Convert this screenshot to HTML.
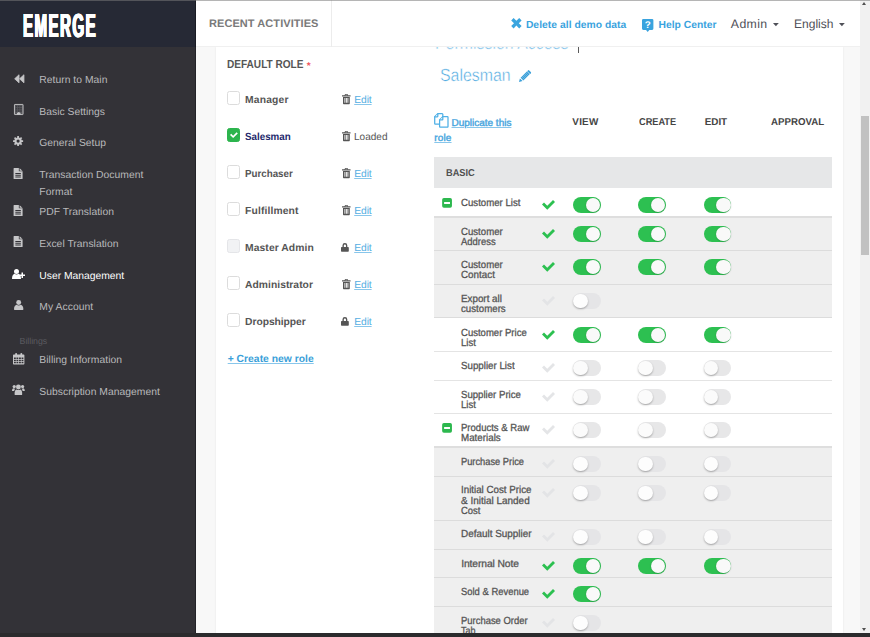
<!DOCTYPE html>
<html lang="en">
<head>
<meta charset="utf-8">
<title>EMERGE - User Management</title>
<style>
*{box-sizing:border-box}
html,body{margin:0;padding:0}
body{text-rendering:geometricPrecision;width:870px;height:637px;overflow:hidden;position:relative;background:#f8f8f8;font-family:"Liberation Sans",sans-serif;color:#555}
.t{position:absolute;white-space:nowrap;line-height:1;display:block;transform-origin:0 50%}
svg{position:absolute;overflow:visible}
ul{list-style:none;margin:0;padding:0}
a{text-decoration:none;color:inherit}
.sidebar{position:absolute;left:0;top:0;width:196px;height:633px;background:#333237;border-right:1px solid #232328;z-index:5}
.logo{position:absolute;left:0;top:0;width:196px;height:47px;background:#262935;border-right:1px solid #191b23}
.logo b{position:absolute;left:23.3px;top:10px;font-size:33.4px;line-height:1;color:#fff;transform-origin:0 0;transform:scaleX(.452);text-shadow:1.3px 0 0 #fff,-1.3px 0 0 #fff,.65px 0 0 #fff,-.65px 0 0 #fff;letter-spacing:3.2px}
.menu .t{color:#b9b9bb}
.menu .on .t{color:#fff}
.topbar{position:absolute;left:196px;top:0;width:664px;height:47px;background:#fff;border-bottom:1px solid #f0f0f0;z-index:4}
.topbar i{position:absolute;left:135px;top:0;width:1px;height:47px;background:#ececec}
.blue{color:#3aa3de}
.lnk{color:#55aee2;text-decoration:underline;text-decoration-thickness:1.3px;text-underline-offset:1px;text-decoration-color:rgba(85,174,226,.7)}
.panel{position:absolute;left:216px;top:47px;width:627px;height:590px;background:#fff;box-shadow:0 0 2px rgba(0,0,0,.08)}
.cb{position:absolute;width:13.2px;height:13.4px;border:1px solid #dcdcdc;border-radius:2.5px;background:#fff}
.cb.dis{background:#f1f2f4;border-color:#e4e5e8}
.cb.chk{background:#2cb44d;border-color:#2cb44d}
.lt{-webkit-text-stroke:.45px #fff}
.sb{font-weight:400;-webkit-text-stroke:.3px currentColor}
.row{position:absolute;left:434px;width:398px;border-bottom:1px solid #dcdcdc}
.row.g{background:#efefef}
.row.w{background:#fff;border-bottom-color:#e4e4e4}
.row.p{border-bottom:2px solid #dedede}
.row.h{background:#e6e7e8;border-bottom:0}
.sw{position:absolute;width:27.6px;height:16.1px;border-radius:8.1px;background:#2dc051}
.sw:after{content:"";position:absolute;right:.7px;top:.9px;width:14.2px;height:14.2px;border-radius:50%;background:#f9f9f9;box-shadow:0 .5px 1.5px rgba(0,0,0,.25)}
.sw.off{background:#e7e7e8}
.sw.off:after{right:auto;left:0;top:.6px;width:14.6px;height:14.6px;background:#fbfbfb;box-shadow:0 1px 2px rgba(0,0,0,.3)}
.g .sw.off{background:#e5e5e7}
.g .sw.off:after{background:#fdfdfd}
.scroll{position:absolute;left:860px;top:0;width:10px;height:633px;background:#f1f1f1;z-index:6}
.scroll b{position:absolute;left:.8px;top:115.5px;width:8.4px;height:139.2px;background:#c1c1c1}
.scroll:before,.scroll:after{content:"";position:absolute;left:2.4px;border:2.7px solid transparent}
.scroll:before{top:2.2px;border-bottom:3px solid #505050;border-top:0}
.scroll:after{bottom:2.2px;border-top:3px solid #505050;border-bottom:0}
.topline{position:absolute;left:0;top:0;width:870px;height:1.2px;background:rgba(120,120,120,.55);z-index:9}
.bottombar{position:absolute;left:0;top:633px;width:870px;height:4px;background:#2b2b2d;z-index:9}
</style>
</head>
<body>
<div class="topline"></div>
<aside class="sidebar">
<div class="logo"><b>EMERGE</b></div>
<ul class="menu">
<li><a><svg style="left:13.8px;top:73.7px" width="10.6" height="9.6" viewBox="0 0 21 19" fill="#c6c6c8" ><path stroke="#c6c6c8" stroke-width="1.600" stroke-linejoin="round" d="M10 1.500v16L1.300 9.500z M19.700 1.500v16L11 9.500z"/></svg><span class="t" style="left:39.3px;top:76.00px;font-size:10.35px;letter-spacing:0.021px;">Return to Main</span></a></li>
<li><a><svg style="left:13.8px;top:104.4px" width="9.5" height="11" viewBox="0 0 19 22" fill="#c6c6c8" ><rect x=".9" y=".9" width="17.2" height="20.2" rx=".6" fill="#59595d" stroke="#c6c6c8" stroke-width="1.8"/><path fill="#3b3b40" d="M3.500 3.500h3v3h-3z M8 3.500h3v3h-3z M12.500 3.500h3v3h-3z M3.500 8h3v3h-3z M8 8h3v3h-3z M12.500 8h3v3h-3z M3.500 12.500h3v3h-3z M8 12.500h3v3h-3z M12.500 12.500h3v3h-3z"/><path d="M6 21.500v-3.500l3.500-2 3.500 2v3.500z"/></svg><span class="t" style="left:39.3px;top:108.00px;font-size:10.35px;letter-spacing:0.013px;">Basic Settings</span></a></li>
<li><a><svg style="left:13.3px;top:136.2px" width="10.2" height="10.2" viewBox="0 0 20 20" fill="#c6c6c8" ><path fill-rule="evenodd" d="M19.85 8.28 L19.85 11.72 L17.20 11.73 L16.31 13.87 L18.18 15.75 L15.75 18.18 L13.87 16.31 L11.73 17.20 L11.72 19.85 L8.28 19.85 L8.27 17.20 L6.13 16.31 L4.25 18.18 L1.82 15.75 L3.69 13.87 L2.80 11.73 L0.15 11.72 L0.15 8.28 L2.80 8.27 L3.69 6.13 L1.82 4.25 L4.25 1.82 L6.13 3.69 L8.27 2.80 L8.28 0.15 L11.72 0.15 L11.73 2.80 L13.87 3.69 L15.75 1.82 L18.18 4.25 L16.31 6.13 L17.20 8.27Z M13.10 10.00 A3.1 3.1 0 1 0 6.90 10.00 A3.1 3.1 0 1 0 13.10 10.00Z"/></svg><span class="t" style="left:39.3px;top:139.00px;font-size:10.35px;">General Setup</span></a></li>
<li><a><svg style="left:13.3px;top:167.8px" width="10.2" height="11" viewBox="0 0 20 22" fill="#c6c6c8" ><path fill-rule="evenodd" d="M1 0h10.5v6.5h7.5v14.5a1 1 0 0 1-1 1h-16a1 1 0 0 1-1-1v-20a1 1 0 0 1 1-1z M13 0.3l5.7 5h-5.7z M4.5 10v1.8h11v-1.8z M4.5 13.5v1.8h11v-1.8z M4.5 17v1.8h11v-1.8z"/></svg><span class="t" style="left:39.3px;top:171.00px;font-size:10.35px;letter-spacing:0.023px;">Transaction Document</span><span class="t" style="left:39.3px;top:188.00px;font-size:10.35px;letter-spacing:0.070px;">Format</span></a></li>
<li><a><svg style="left:13.3px;top:204.7px" width="10.2" height="11" viewBox="0 0 20 22" fill="#c6c6c8" ><path fill-rule="evenodd" d="M1 0h10.5v6.5h7.5v14.5a1 1 0 0 1-1 1h-16a1 1 0 0 1-1-1v-20a1 1 0 0 1 1-1z M13 0.3l5.7 5h-5.7z M4.5 10v1.8h11v-1.8z M4.5 13.5v1.8h11v-1.8z M4.5 17v1.8h11v-1.8z"/></svg><span class="t" style="left:39.3px;top:208.00px;font-size:10.35px;letter-spacing:0.039px;">PDF Translation</span></a></li>
<li><a><svg style="left:13.3px;top:236.1px" width="10.2" height="11" viewBox="0 0 20 22" fill="#c6c6c8" ><path fill-rule="evenodd" d="M1 0h10.5v6.5h7.5v14.5a1 1 0 0 1-1 1h-16a1 1 0 0 1-1-1v-20a1 1 0 0 1 1-1z M13 0.3l5.7 5h-5.7z M4.5 10v1.8h11v-1.8z M4.5 13.5v1.8h11v-1.8z M4.5 17v1.8h11v-1.8z"/></svg><span class="t" style="left:39.3px;top:240.00px;font-size:10.35px;letter-spacing:0.022px;">Excel Translation</span></a></li>
<li class=on><a><svg style="left:12.2px;top:268.7px" width="13" height="10.2" viewBox="0 0 26 20" fill="#fff" ><circle cx="9" cy="5" r="5"/><path d="M0 19c0-6 3-9 5-9.5q4 3 8 0c2 .5 5 3.500 5 9.500a1.500 1 0 0 1-1.500 1h-15a1.500 1 0 0 1-1.500-1z"/><path d="M19 7h3v4h4v3h-4v4h-3v-4h-4v-3h4z"/></svg><span class="t" style="left:39.3px;top:272.00px;font-size:10.35px;letter-spacing:-0.013px;">User Management</span></a></li>
<li><a><svg style="left:13.8px;top:300.2px" width="9.4" height="9.9" viewBox="0 0 19 20" fill="#c6c6c8" ><circle cx="9.500" cy="5" r="5"/><path d="M0 18.500c0-6 3-8.500 5-9q4.500 3 9 0c2 .5 5 3 5 9a1.500 1.500 0 0 1-1.500 1.500h-16a1.500 1.500 0 0 1-1.500-1.500z"/></svg><span class="t" style="left:39.3px;top:303.00px;font-size:10.35px;letter-spacing:0.050px;">My Account</span></a></li>
<li class="sep"><span class="t" style="left:19.6px;top:337.00px;font-size:8.8px;letter-spacing:-0.034px;color:#5b5b60;">Billings</span></li>
<li><a><svg style="left:12.8px;top:352.6px" width="11.4" height="11.4" viewBox="0 0 23 23" fill="#c6c6c8" ><path fill-rule="evenodd" d="M1.500 3h20a1.500 1.500 0 0 1 1.500 1.500v17a1.500 1.500 0 0 1-1.500 1.500h-20a1.500 1.500 0 0 1-1.500-1.500v-17a1.500 1.500 0 0 1 1.500-1.500z M2 9v3h3.700v-3z M7 9v3h3.700v-3z M12.200 9v3h3.700v-3z M17.300 9v3h3.700v-3z M2 13.400v3h3.700v-3z M7 13.400v3h3.700v-3z M12.200 13.400v3h3.700v-3z M17.300 13.400v3h3.700v-3z M2 17.800v3h3.700v-3z M7 17.800v3h3.700v-3z M12.200 17.800v3h3.700v-3z M17.300 17.800v3h3.700v-3z"/><rect x="4.500" y="0" width="3.600" height="6.500" rx="1.500"/><rect x="15" y="0" width="3.600" height="6.500" rx="1.500"/></svg><span class="t" style="left:39.3px;top:356.00px;font-size:10.35px;letter-spacing:0.028px;">Billing Information</span></a></li>
<li><a><svg style="left:12.0px;top:384.0px" width="12.8" height="11" viewBox="0 0 26 22" fill="#c6c6c8" ><circle cx="13" cy="6" r="5"/><path d="M5.500 22c-1-6 1-10.500 3.500-11q4 2.500 8 0c2.500 .5 4.500 5 3.500 11z"/><circle cx="4.500" cy="5" r="3.300"/><circle cx="21.500" cy="5" r="3.300"/><path d="M0 14c0-3.500 1.500-5 3-5.300q2 1 4 .3q-2.500 2.500-2.500 5z"/><path d="M26 14c0-3.500-1.500-5-3-5.300q-2 1-4 .3q2.500 2.500 2.500 5z"/></svg><span class="t" style="left:39.3px;top:388.00px;font-size:10.35px;letter-spacing:0.016px;">Subscription Management</span></a></li>
</ul>
</aside>
<header class="topbar">
<span class="t" style="left:13.0px;top:19.00px;font-size:11px;letter-spacing:0.066px;color:#7a7a7a;font-weight:700;">RECENT ACTIVITIES</span><i></i>
<svg style="left:315.1px;top:17.9px" width="10.8" height="10.4" viewBox="0 0 20 20" fill="#3aa5df" ><path d="M4.600 0l5.400 5.400 5.400-5.400 4.600 4.600-5.400 5.400 5.400 5.400-4.600 4.600-5.400-5.400-5.400 5.400-4.600-4.600 5.400-5.400-5.400-5.400z"/></svg><span class="t blue" style="left:329.9px;top:21.00px;font-size:10.3px;letter-spacing:0.044px;font-weight:700;">Delete all demo data</span><svg style="left:446.2px;top:18.8px" width="11.4" height="13" viewBox="0 0 22 25" fill="#3aa3de" ><path d="M2.500 0h17a2.500 2.500 0 0 1 2.500 2.500v16a2.500 2.500 0 0 1-2.500 2.500h-5.300l-3.200 4-3.200-4h-5.300a2.500 2.500 0 0 1-2.500-2.500v-16a2.500 2.500 0 0 1 2.500-2.500z"/><text x="11" y="17.800" font-size="19" font-weight="700" text-anchor="middle" fill="#fff" font-family="Liberation Sans,sans-serif">?</text></svg><span class="t blue" style="left:462.5px;top:21.00px;font-size:10.3px;letter-spacing:0.012px;font-weight:700;">Help Center</span><span class="t" style="left:534.8px;top:18.00px;font-size:12.3px;letter-spacing:0.389px;color:#4f5058;">Admin</span><svg style="left:576.8px;top:23.2px" width="5.8" height="3.2" viewBox="0 0 12 6.500" fill="#4f5058" ><path d="M0 0h12l-6 6.500z"/></svg><span class="t" style="left:597.5px;top:18.00px;font-size:12.3px;transform:scaleX(0.9795);color:#4f5058;">English</span><svg style="left:642.6px;top:23.2px" width="5.8" height="3.2" viewBox="0 0 12 6.500" fill="#4f5058" ><path d="M0 0h12l-6 6.500z"/></svg></header>
<main class="panel"></main>
<section class="roles">
<span class="t" style="left:227.4px;top:59.00px;font-size:11.6px;transform:scaleX(0.8688);color:#555;font-weight:700;">DEFAULT ROLE</span><span class="t" style="left:306.8px;top:62.00px;font-size:10px;color:#f0525a;font-weight:700;">*</span><div class="role"><span class="cb " style="left:227px;top:91.4px"></span><span class="t" style="left:245.1px;top:96.00px;font-size:10.3px;letter-spacing:0.159px;color:#555;font-weight:700;">Manager</span><svg style="left:341.8px;top:94.1px" width="8.8" height="10.2" viewBox="0 0 18 21" fill="#555" ><path fill-rule="evenodd" d="M6.500 0h5l1 2.500h5v2.500h-17.500v-2.500h5z M7.300 1.300l-.5 1.200h4.400l-.5-1.200z M2 6h14v13.500a1.500 1.500 0 0 1-1.500 1.500h-11a1.500 1.500 0 0 1-1.500-1.500z M5 8.500v9.500h1.800v-9.500z M8.100 8.500v9.500h1.800v-9.500z M11.200 8.500v9.500h1.800v-9.500z"/></svg><a class="t lnk" style="left:354.2px;top:96.00px;font-size:10.3px;letter-spacing:-0.078px;">Edit</a></div>
<div class="role"><span class="cb chk" style="left:227px;top:128.4px"><svg style="left:1.9px;top:2.8px" width="7.8" height="6.1" viewBox="0 0 26 19" fill="#fff"><path d="M22 0l4 4-15.500 15.500-10.500-10.500 4-4 6.500 6.500z"/></svg></span><span class="t" style="left:245.1px;top:133.00px;font-size:10.3px;transform:scaleX(0.9505);color:#23286b;font-weight:700;">Salesman</span><svg style="left:341.8px;top:131.1px" width="8.8" height="10.2" viewBox="0 0 18 21" fill="#555" ><path fill-rule="evenodd" d="M6.500 0h5l1 2.500h5v2.500h-17.500v-2.500h5z M7.300 1.300l-.5 1.200h4.400l-.5-1.200z M2 6h14v13.500a1.500 1.500 0 0 1-1.500 1.500h-11a1.500 1.500 0 0 1-1.500-1.500z M5 8.500v9.500h1.800v-9.500z M8.100 8.500v9.500h1.800v-9.500z M11.200 8.500v9.500h1.800v-9.500z"/></svg><span class="t" style="left:354.2px;top:133.00px;font-size:10.3px;transform:scaleX(0.9750);color:#555;">Loaded</span></div>
<div class="role"><span class="cb " style="left:227px;top:165.4px"></span><span class="t" style="left:245.1px;top:170.00px;font-size:10.3px;transform:scaleX(0.9472);color:#555;font-weight:700;">Purchaser</span><svg style="left:341.8px;top:168.1px" width="8.8" height="10.2" viewBox="0 0 18 21" fill="#555" ><path fill-rule="evenodd" d="M6.500 0h5l1 2.500h5v2.500h-17.500v-2.500h5z M7.300 1.300l-.5 1.200h4.400l-.5-1.200z M2 6h14v13.500a1.500 1.500 0 0 1-1.500 1.500h-11a1.500 1.500 0 0 1-1.500-1.500z M5 8.500v9.500h1.800v-9.500z M8.100 8.500v9.500h1.800v-9.500z M11.200 8.500v9.500h1.800v-9.500z"/></svg><a class="t lnk" style="left:354.2px;top:170.00px;font-size:10.3px;letter-spacing:-0.078px;">Edit</a></div>
<div class="role"><span class="cb " style="left:227px;top:202.4px"></span><span class="t" style="left:245.1px;top:207.00px;font-size:10.3px;letter-spacing:0.125px;color:#555;font-weight:700;">Fulfillment</span><svg style="left:341.8px;top:205.1px" width="8.8" height="10.2" viewBox="0 0 18 21" fill="#555" ><path fill-rule="evenodd" d="M6.500 0h5l1 2.500h5v2.500h-17.500v-2.500h5z M7.300 1.300l-.5 1.200h4.400l-.5-1.200z M2 6h14v13.500a1.500 1.500 0 0 1-1.500 1.500h-11a1.500 1.500 0 0 1-1.500-1.500z M5 8.500v9.500h1.800v-9.500z M8.100 8.500v9.500h1.800v-9.500z M11.200 8.500v9.500h1.800v-9.500z"/></svg><a class="t lnk" style="left:354.2px;top:207.00px;font-size:10.3px;letter-spacing:-0.078px;">Edit</a></div>
<div class="role"><span class="cb dis" style="left:227px;top:239.4px"></span><span class="t" style="left:245.1px;top:244.00px;font-size:10.3px;letter-spacing:0.081px;color:#555;font-weight:700;">Master Admin</span><svg style="left:341.4px;top:242.5px" width="7.8" height="8.9" viewBox="0 0 16 18" fill="#555" ><path fill-rule="evenodd" d="M3 8v-3a5 5 0 0 1 10 0v3h1.500a1.500 1.500 0 0 1 1.500 1.500v7a1.500 1.500 0 0 1-1.500 1.500h-13a1.500 1.500 0 0 1-1.500-1.500v-7a1.500 1.500 0 0 1 1.500-1.500z M5.800 8h4.400v-3a2.200 2.200 0 0 0-4.400 0z"/></svg><a class="t lnk" style="left:354.2px;top:244.00px;font-size:10.3px;letter-spacing:-0.078px;">Edit</a></div>
<div class="role"><span class="cb " style="left:227px;top:276.4px"></span><span class="t" style="left:245.1px;top:281.00px;font-size:10.3px;letter-spacing:0.025px;color:#555;font-weight:700;">Administrator</span><svg style="left:341.8px;top:279.1px" width="8.8" height="10.2" viewBox="0 0 18 21" fill="#555" ><path fill-rule="evenodd" d="M6.500 0h5l1 2.500h5v2.500h-17.500v-2.500h5z M7.300 1.300l-.5 1.200h4.400l-.5-1.200z M2 6h14v13.500a1.500 1.500 0 0 1-1.500 1.500h-11a1.500 1.500 0 0 1-1.500-1.500z M5 8.500v9.500h1.800v-9.500z M8.100 8.500v9.500h1.800v-9.500z M11.200 8.500v9.500h1.800v-9.500z"/></svg><a class="t lnk" style="left:354.2px;top:281.00px;font-size:10.3px;letter-spacing:-0.078px;">Edit</a></div>
<div class="role"><span class="cb " style="left:227px;top:313.4px"></span><span class="t" style="left:245.1px;top:318.00px;font-size:10.3px;letter-spacing:-0.060px;color:#555;font-weight:700;">Dropshipper</span><svg style="left:341.4px;top:316.5px" width="7.8" height="8.9" viewBox="0 0 16 18" fill="#555" ><path fill-rule="evenodd" d="M3 8v-3a5 5 0 0 1 10 0v3h1.500a1.500 1.500 0 0 1 1.500 1.500v7a1.500 1.500 0 0 1-1.500 1.500h-13a1.500 1.500 0 0 1-1.500-1.500v-7a1.500 1.500 0 0 1 1.500-1.500z M5.800 8h4.400v-3a2.200 2.200 0 0 0-4.400 0z"/></svg><a class="t lnk" style="left:354.2px;top:318.00px;font-size:10.3px;letter-spacing:-0.078px;">Edit</a></div>
<a class="t lnk" style="left:227.7px;top:355.00px;font-size:10.3px;letter-spacing:0.028px;font-weight:700;color:#3a9fd9;">+ Create new role</a></section>
<section class="perms">
<h2 class="t lt" style="left:435.3px;top:34.00px;font-size:18.4px;transform:scaleX(0.8645);color:#7cc0e9;margin:0;font-weight:400;">Permission Access</h2><span style="position:absolute;left:577.6px;top:36px;width:1px;height:16.8px;background:#5a5a5a"></span><h3 class="t lt" style="left:440.1px;top:67.00px;font-size:17.6px;transform:scaleX(0.9020);color:#4aa7de;margin:0;font-weight:400;">Salesman</h3><svg style="left:519.1px;top:70.0px" width="12.5" height="12" viewBox="0 0 25 24" fill="#3a9fd9" ><path d="M0 24l1.800-7.200 5.400 5.400z M3.200 15.300l13-13 5.500 5.500-13 13z M17.600 .9a2 2 0 0 1 2.800 0l3.200 3.200a2 2 0 0 1 0 2.800l-1 1-5.500-5.500z"/><path stroke="#fff" stroke-opacity=".55" stroke-width=".9" fill="none" d="M5 17l12.500-12.500 M7 19l12.500-12.500"/></svg><svg style="left:434.0px;top:113.0px" width="15" height="15" viewBox="0 0 15 15" fill="none" ><g fill="#fff" stroke="#4fb0e6" stroke-width="1.250" stroke-linejoin="round" stroke-linecap="round"><path d="M3.800 .7H8.200a.6 .6 0 0 1 .6 .6V10.400a.6 .6 0 0 1-.6 .6H1.300a.6 .6 0 0 1-.6-.6V3.800z"/><path d="M3.800 .9V3.300a.5 .5 0 0 1-.5 .5H.9"/><path d="M8.800 3.700H13.400a.6 .6 0 0 1 .6 .6V13.600a.6 .6 0 0 1-.6 .6H6.200a.6 .6 0 0 1-.6-.6V6.900z"/><path d="M8.800 3.900V6.400a.5 .5 0 0 1-.5 .5H5.800"/></g></svg><a class="t lnk sb" style="left:451.5px;top:119.00px;font-size:10.0px;letter-spacing:-0.010px;-webkit-text-stroke-width:.42px;color:#49a6de;">Duplicate this</a><a class="t lnk sb" style="left:434.3px;top:134.00px;font-size:10.0px;letter-spacing:0.138px;-webkit-text-stroke-width:.42px;color:#49a6de;">role</a><span class="t" style="left:572.3px;top:118.00px;font-size:9.9px;letter-spacing:0.248px;color:#444;font-weight:700;">VIEW</span><span class="t" style="left:638.5px;top:118.00px;font-size:9.9px;transform:scaleX(0.9303);color:#444;font-weight:700;">CREATE</span><span class="t" style="left:704.8px;top:118.00px;font-size:9.9px;letter-spacing:-0.068px;color:#444;font-weight:700;">EDIT</span><span class="t" style="left:771.3px;top:118.00px;font-size:9.9px;transform:scaleX(0.9807);color:#444;font-weight:700;">APPROVAL</span><div class="row h" style="top:157px;height:31px"><span class="t" style="left:12.0px;top:12.00px;font-size:10.0px;transform:scaleX(0.9253);color:#505050;font-weight:700;">BASIC</span></div>
<div class="row w p" style="top:188px;height:30px"><svg style="left:7.9px;top:10.0px" width="10.1" height="9.8" viewBox="0 0 20 20" fill="#2cb84e" ><path fill-rule="evenodd" d="M3.500 0h13a3.500 3.500 0 0 1 3.500 3.500v13a3.500 3.500 0 0 1-3.500 3.500h-13a3.500 3.500 0 0 1-3.500-3.500v-13a3.500 3.500 0 0 1 3.500-3.500z M4 8v4h12v-4z"/></svg><span class="t sb" style="left:27.2px;top:11.00px;font-size:10.3px;transform:scaleX(0.9368);color:#555;">Customer List</span><svg style="left:107.7px;top:11.8px" width="13" height="9.6" viewBox="0 0 26 19" fill="#2cc050" ><path d="M22 0l4 4-15.500 15.500-10.500-10.500 4-4 6.500 6.500z"/></svg><span class="sw" style="left:139.2px;top:9px"></span><span class="sw" style="left:204.3px;top:9px"></span><span class="sw" style="left:269.6px;top:9px"></span></div>
<div class="row g" style="top:218px;height:33px"><span class="t sb" style="left:27.2px;top:10.00px;font-size:10.3px;transform:scaleX(0.9345);color:#555;">Customer</span><span class="t sb" style="left:27.2px;top:20.00px;font-size:10.3px;transform:scaleX(0.9162);color:#555;">Address</span><svg style="left:107.7px;top:10.8px" width="13" height="9.6" viewBox="0 0 26 19" fill="#2cc050" ><path d="M22 0l4 4-15.500 15.500-10.500-10.500 4-4 6.500 6.500z"/></svg><span class="sw" style="left:139.2px;top:8px"></span><span class="sw" style="left:204.3px;top:8px"></span><span class="sw" style="left:269.6px;top:8px"></span></div>
<div class="row g" style="top:251px;height:34px"><span class="t sb" style="left:27.2px;top:10.00px;font-size:10.3px;transform:scaleX(0.9345);color:#555;">Customer</span><span class="t sb" style="left:27.2px;top:20.00px;font-size:10.3px;transform:scaleX(0.9554);color:#555;">Contact</span><svg style="left:107.7px;top:10.8px" width="13" height="9.6" viewBox="0 0 26 19" fill="#2cc050" ><path d="M22 0l4 4-15.500 15.500-10.500-10.500 4-4 6.500 6.500z"/></svg><span class="sw" style="left:139.2px;top:8px"></span><span class="sw" style="left:204.3px;top:8px"></span><span class="sw" style="left:269.6px;top:8px"></span></div>
<div class="row g" style="top:285px;height:33px"><span class="t sb" style="left:27.2px;top:10.00px;font-size:10.3px;transform:scaleX(0.9529);color:#555;">Export all</span><span class="t sb" style="left:27.2px;top:20.00px;font-size:10.3px;transform:scaleX(0.9414);color:#555;">customers</span><svg style="left:107.7px;top:10.8px" width="13" height="9.6" viewBox="0 0 26 19" fill="#e3e4e6" ><path d="M22 0l4 4-15.500 15.500-10.500-10.500 4-4 6.500 6.500z"/></svg><span class="sw off" style="left:139.2px;top:8px"></span></div>
<div class="row w" style="top:318px;height:34px"><span class="t sb" style="left:27.2px;top:11.00px;font-size:10.3px;transform:scaleX(0.9262);color:#555;">Customer Price</span><span class="t sb" style="left:27.2px;top:21.00px;font-size:10.3px;transform:scaleX(0.9304);color:#555;">List</span><svg style="left:107.7px;top:11.8px" width="13" height="9.6" viewBox="0 0 26 19" fill="#2cc050" ><path d="M22 0l4 4-15.500 15.500-10.500-10.500 4-4 6.500 6.500z"/></svg><span class="sw" style="left:139.2px;top:9px"></span><span class="sw" style="left:204.3px;top:9px"></span><span class="sw" style="left:269.6px;top:9px"></span></div>
<div class="row w" style="top:352px;height:29px"><span class="t sb" style="left:27.2px;top:10.00px;font-size:10.3px;transform:scaleX(0.9461);color:#555;">Supplier List</span><svg style="left:107.7px;top:10.8px" width="13" height="9.6" viewBox="0 0 26 19" fill="#e4e5e7" ><path d="M22 0l4 4-15.500 15.500-10.500-10.500 4-4 6.500 6.500z"/></svg><span class="sw off" style="left:139.2px;top:8px"></span><span class="sw off" style="left:204.3px;top:8px"></span><span class="sw off" style="left:269.6px;top:8px"></span></div>
<div class="row w" style="top:381px;height:33px"><span class="t sb" style="left:27.2px;top:10.00px;font-size:10.3px;transform:scaleX(0.9346);color:#555;">Supplier Price</span><span class="t sb" style="left:27.2px;top:20.00px;font-size:10.3px;transform:scaleX(0.9304);color:#555;">List</span><svg style="left:107.7px;top:10.8px" width="13" height="9.6" viewBox="0 0 26 19" fill="#e4e5e7" ><path d="M22 0l4 4-15.500 15.500-10.500-10.500 4-4 6.500 6.500z"/></svg><span class="sw off" style="left:139.2px;top:8px"></span><span class="sw off" style="left:204.3px;top:8px"></span><span class="sw off" style="left:269.6px;top:8px"></span></div>
<div class="row w p" style="top:414px;height:34px"><svg style="left:7.9px;top:9.0px" width="10.1" height="9.8" viewBox="0 0 20 20" fill="#2cb84e" ><path fill-rule="evenodd" d="M3.500 0h13a3.500 3.500 0 0 1 3.500 3.500v13a3.500 3.500 0 0 1-3.500 3.500h-13a3.500 3.500 0 0 1-3.500-3.500v-13a3.500 3.500 0 0 1 3.500-3.500z M4 8v4h12v-4z"/></svg><span class="t sb" style="left:27.2px;top:10.00px;font-size:10.3px;transform:scaleX(0.9253);color:#555;">Products &amp; Raw</span><span class="t sb" style="left:27.2px;top:20.00px;font-size:10.3px;transform:scaleX(0.9505);color:#555;">Materials</span><svg style="left:107.7px;top:10.8px" width="13" height="9.6" viewBox="0 0 26 19" fill="#e4e5e7" ><path d="M22 0l4 4-15.500 15.500-10.500-10.500 4-4 6.500 6.500z"/></svg><span class="sw off" style="left:139.2px;top:8px"></span><span class="sw off" style="left:204.3px;top:8px"></span><span class="sw off" style="left:269.6px;top:8px"></span></div>
<div class="row g" style="top:448px;height:29px"><span class="t sb" style="left:27.2px;top:10.00px;font-size:10.3px;transform:scaleX(0.9024);color:#555;">Purchase Price</span><svg style="left:107.7px;top:10.8px" width="13" height="9.6" viewBox="0 0 26 19" fill="#e3e4e6" ><path d="M22 0l4 4-15.500 15.500-10.500-10.500 4-4 6.500 6.500z"/></svg><span class="sw off" style="left:139.2px;top:8px"></span><span class="sw off" style="left:204.3px;top:8px"></span><span class="sw off" style="left:269.6px;top:8px"></span></div>
<div class="row g" style="top:477px;height:44px"><span class="t sb" style="left:27.2px;top:9.00px;font-size:10.3px;transform:scaleX(0.9477);color:#555;">Initial Cost Price</span><span class="t sb" style="left:27.2px;top:20.00px;font-size:10.3px;transform:scaleX(0.9678);color:#555;">&amp; Initial Landed</span><span class="t sb" style="left:27.2px;top:30.00px;font-size:10.3px;transform:scaleX(0.9163);color:#555;">Cost</span><svg style="left:107.7px;top:10.8px" width="13" height="9.6" viewBox="0 0 26 19" fill="#e3e4e6" ><path d="M22 0l4 4-15.500 15.500-10.500-10.500 4-4 6.500 6.500z"/></svg><span class="sw off" style="left:139.2px;top:8px"></span><span class="sw off" style="left:204.3px;top:8px"></span><span class="sw off" style="left:269.6px;top:8px"></span></div>
<div class="row g" style="top:521px;height:29px"><span class="t sb" style="left:27.2px;top:9.00px;font-size:10.3px;transform:scaleX(0.9625);color:#555;">Default Supplier</span><svg style="left:107.7px;top:10.8px" width="13" height="9.6" viewBox="0 0 26 19" fill="#e3e4e6" ><path d="M22 0l4 4-15.500 15.500-10.500-10.500 4-4 6.500 6.500z"/></svg><span class="sw off" style="left:139.2px;top:8px"></span><span class="sw off" style="left:204.3px;top:8px"></span><span class="sw off" style="left:269.6px;top:8px"></span></div>
<div class="row g" style="top:550px;height:28px"><span class="t sb" style="left:27.2px;top:10.00px;font-size:10.3px;letter-spacing:-0.104px;color:#555;">Internal Note</span><svg style="left:107.7px;top:10.8px" width="13" height="9.6" viewBox="0 0 26 19" fill="#2cc050" ><path d="M22 0l4 4-15.500 15.500-10.500-10.500 4-4 6.500 6.500z"/></svg><span class="sw" style="left:139.2px;top:8px"></span><span class="sw" style="left:204.3px;top:8px"></span><span class="sw" style="left:269.6px;top:8px"></span></div>
<div class="row g" style="top:578px;height:29px"><span class="t sb" style="left:27.2px;top:10.00px;font-size:10.3px;transform:scaleX(0.9153);color:#555;">Sold &amp; Revenue</span><svg style="left:107.7px;top:10.8px" width="13" height="9.6" viewBox="0 0 26 19" fill="#2cc050" ><path d="M22 0l4 4-15.500 15.500-10.500-10.500 4-4 6.500 6.500z"/></svg><span class="sw" style="left:139.2px;top:8px"></span></div>
<div class="row g" style="top:607px;height:33px"><span class="t sb" style="left:27.2px;top:10.00px;font-size:10.3px;transform:scaleX(0.9165);color:#555;">Purchase Order</span><span class="t sb" style="left:27.2px;top:20.00px;font-size:10.3px;transform:scaleX(0.8679);color:#555;">Tab</span><svg style="left:107.7px;top:10.8px" width="13" height="9.6" viewBox="0 0 26 19" fill="#e3e4e6" ><path d="M22 0l4 4-15.500 15.500-10.500-10.500 4-4 6.500 6.500z"/></svg><span class="sw off" style="left:139.2px;top:8px"></span></div>
</section>
<div class="scroll"><b></b></div>
<div class="bottombar"></div>
</body>
</html>
